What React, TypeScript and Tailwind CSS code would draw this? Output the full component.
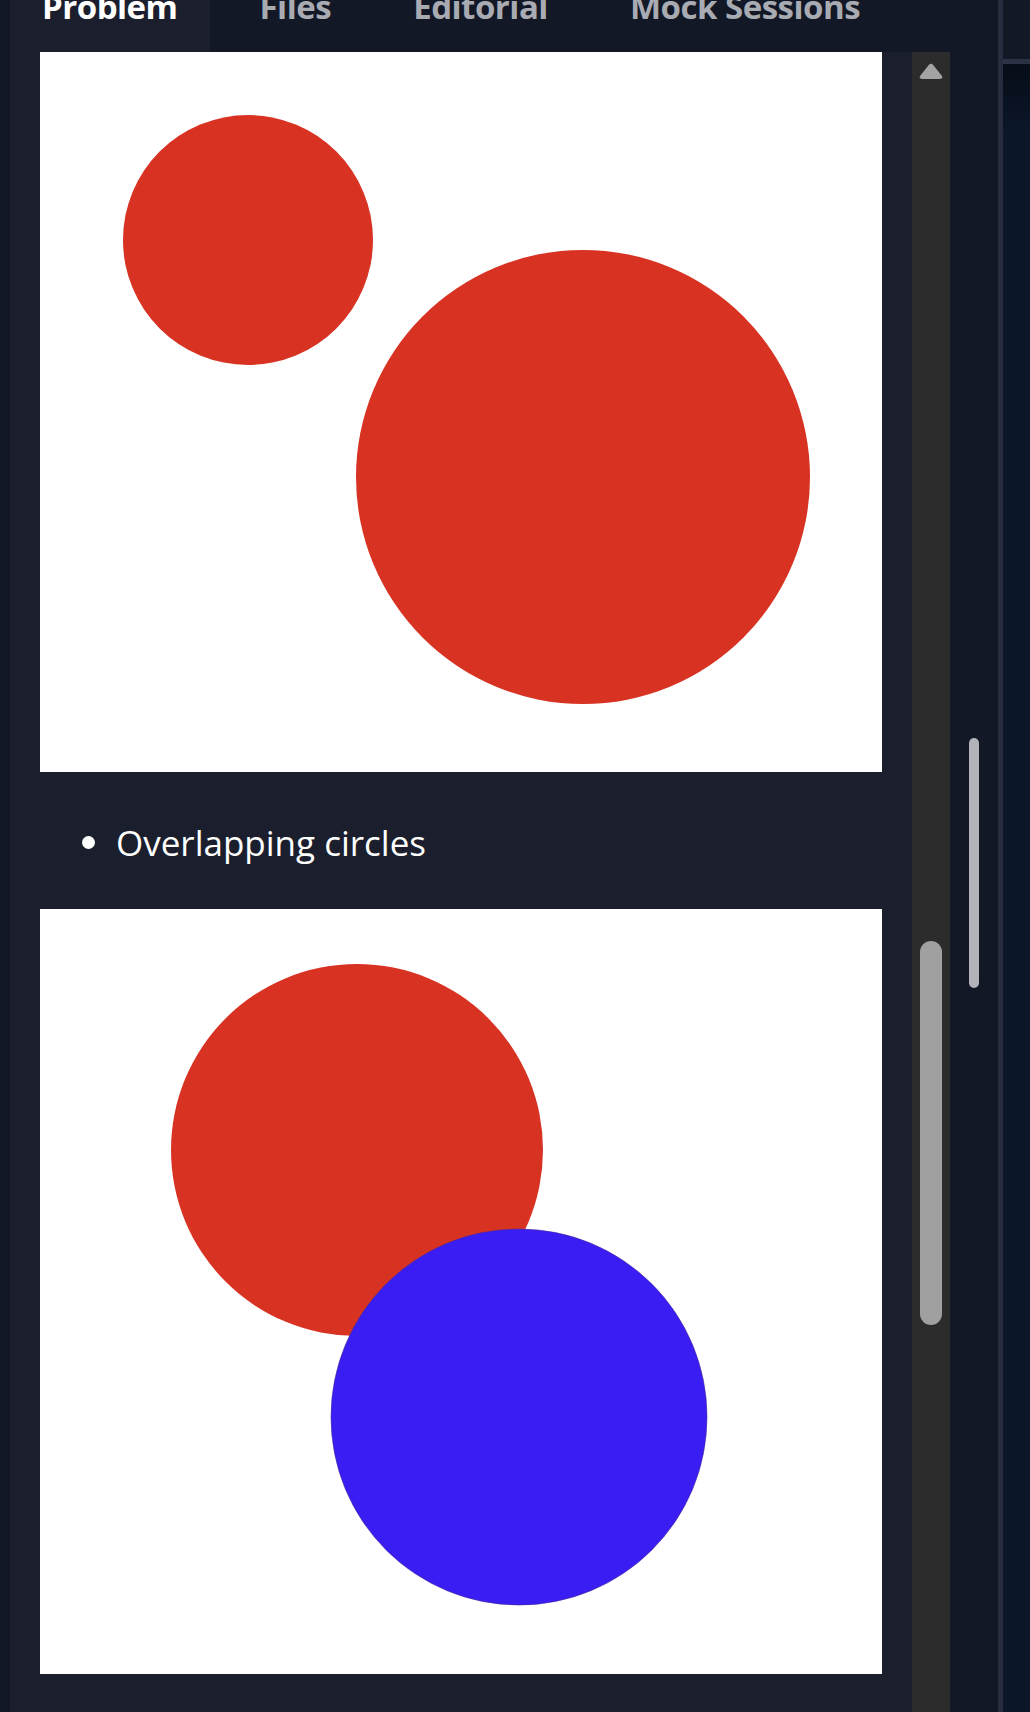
import React from 'react';

const tabs = ['Problem', 'Files', 'Editorial', 'Mock Sessions'];

const App: React.FC = () => {
  return (
    <div className="w-[1030px] h-[1712px] flex bg-[#121826] overflow-hidden font-['Open_Sans','Noto_Sans',sans-serif]">
      {/* Left workspace */}
      <div className="w-[998px] flex flex-col pl-[10px]">
        {/* Tabs */}
        <div className="h-[52px] flex gap-[18px] shrink-0">
          {tabs.map((tab, i) => (
            <div
              key={tab}
              className={
                i === 0
                  ? 'h-[52px] px-[32px] bg-[#1b1f2d] text-white'
                  : 'h-[52px] px-[32px] text-[#a9abb2]'
              }
            >
              <span className="block mt-[-10px] text-[33px] leading-[33px] font-bold tracking-[-0.5px]">{tab}</span>
            </div>
          ))}
        </div>

        <div className="flex flex-1 min-h-0">
          {/* Problem content */}
          <div className="w-[902px] bg-[#1b1f2d] pl-[30px]">
            <div className="w-[842px] h-[720px] bg-white">
              <svg width="842" height="720" viewBox="0 0 842 720">
                <circle cx="208" cy="188" r="125" fill="#d83223" />
                <circle cx="543" cy="425" r="227" fill="#d83223" />
              </svg>
            </div>

            <div className="h-[137px] pt-[4px] flex items-center">
              <span className="ml-[42px] w-[13px] h-[13px] rounded-full bg-white" />
              <span className="ml-[21px] text-[35px] leading-none text-white">Overlapping circles</span>
            </div>

            <div className="w-[842px] h-[765px] bg-white">
              <svg width="842" height="765" viewBox="0 0 842 765">
                <circle cx="317" cy="241" r="186" fill="#d83223" />
                <circle cx="479" cy="508" r="188" fill="#3a1df2" stroke="#4a2a9a" strokeWidth="0.6" />
              </svg>
            </div>
          </div>

          {/* Scrollbar */}
          <div className="w-[38px] bg-[#2c2c2c] flex flex-col items-center">
            <svg className="mt-[11px]" width="24" height="18" viewBox="0 0 24 18">
              <path d="M9.6 2.2 Q12 -0.6 14.4 2.2 L22.6 12.6 Q24.6 16 20.8 16 H3.2 Q-0.6 16 1.4 12.6 Z" fill="#a3a3a3" />
            </svg>
            <div className="mt-[860px] w-[22px] h-[384px] rounded-full bg-[#a0a0a0]" />
          </div>

          {/* Side gutter */}
          <div className="w-[48px] pl-[19px]">
            <div className="mt-[686px] w-[10px] h-[250px] rounded-full bg-[#b1b3b9]" />
          </div>
        </div>
      </div>

      {/* Divider */}
      <div className="w-[5px] bg-[#272c3f]" />

      {/* Right pane */}
      <div className="flex-1 flex flex-col">
        <div className="h-[59px] bg-[#131826]" />
        <div className="h-[5px] bg-[#2a3243]" />
        <div className="flex-1 bg-gradient-to-b from-[#070d18] to-[#0b1628] to-[4%]" />
      </div>
    </div>
  );
};

export default App;
